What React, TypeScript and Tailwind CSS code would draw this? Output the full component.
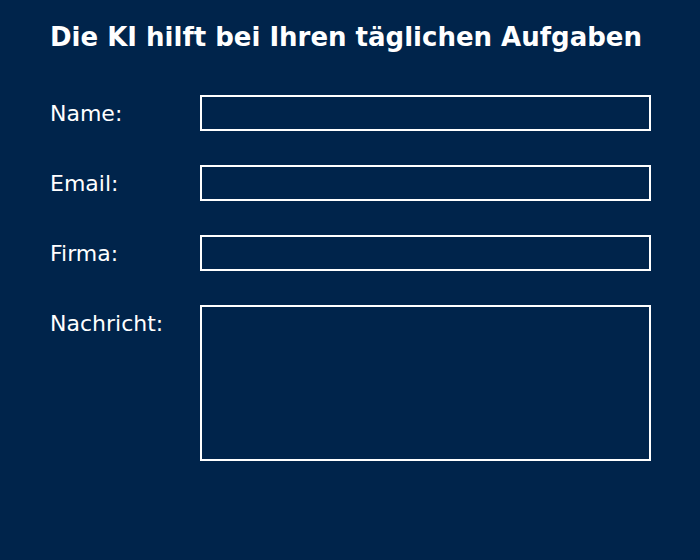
import React from "react";

const fields = ["Name:", "Email:", "Firma:"];

export default function App() {
  return (
    <div
      className="w-[700px] h-[560px] bg-[#00244b] text-white overflow-hidden"
      style={{ fontFamily: '"DejaVu Sans", sans-serif' }}
    >
      <div className="pl-[50px] pt-[22px]">
        <h1 className="text-[26px] leading-[30px] font-bold">
          Die KI hilft bei Ihren täglichen Aufgaben
        </h1>
        <div className="mt-[43px] flex flex-col gap-[34px]">
          {fields.map((f) => (
            <div key={f} className="flex items-start">
              <label className="w-[150px] h-[36px] text-[22px] leading-[38px]">{f}</label>
              <div className="w-[451px] h-[36px] border-2 border-white" />
            </div>
          ))}
          <div className="flex items-start">
            <label className="w-[150px] h-[36px] text-[22px] leading-[38px]">Nachricht:</label>
            <div className="w-[451px] h-[156px] border-2 border-white" />
          </div>
        </div>
      </div>
    </div>
  );
}
